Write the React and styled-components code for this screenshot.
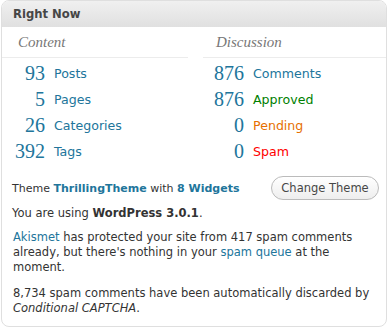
import styled, { createGlobalStyle } from "styled-components";

const GlobalStyle = createGlobalStyle`
  html, body {
    margin: 0;
    padding: 0;
    background: #ffffff;
  }
  body {
    font-family: "DejaVu Sans", Verdana, sans-serif;
    color: #333333;
  }
`;

const link = "#21759b";

const Widget = styled.div`
  box-sizing: border-box;
  width: 386px;
  height: 327px;
  margin-left: 1px;
  border: 1px solid #dfdfdf;
  border-radius: 8px;
  overflow: hidden;
  background: #ffffff;
`;

const Header = styled.h3`
  margin: 0;
  height: 26px;
  line-height: 26px;
  padding-left: 11px;
  font-size: 11.6px;
  font-weight: bold;
  color: #464646;
  background: linear-gradient(to bottom, #f0f0f0, #e0e0e0);
`;

const Table = styled.div`
  display: grid;
  grid-template-columns: 186px 1fr;
  column-gap: 15px;
`;

const Column = styled.div`
  display: flex;
  flex-direction: column;
`;

const SubHead = styled.div`
  height: 30px;
  line-height: 30px;
  padding-left: ${({ $pl }) => $pl}px;
  border-bottom: 1px solid #ececec;
  font-family: "Liberation Serif", Georgia, serif;
  font-style: italic;
  font-size: 15px;
  color: #777777;
  margin-bottom: 2px;
`;

const Row = styled.div`
  display: flex;
  align-items: center;
  height: 26px;
`;

const Count = styled.span`
  width: ${({ $w }) => $w}px;
  text-align: right;
  font-family: "Liberation Serif", Georgia, serif;
  font-size: 20px;
  color: ${link};
`;

const Label = styled.span`
  margin-left: 9px;
  font-size: 12.6px;
  color: ${({ $c }) => $c || link};
`;

const Versions = styled.div`
  padding: 0 7px 0 10px;
  margin-top: 12px;
  font-size: 11.5px;
`;

const ThemeRow = styled.div`
  display: flex;
  align-items: center;
  justify-content: space-between;
  height: 24px;
  font-size: 11px;
`;

const Strong = styled.b`
  color: ${({ $link }) => ($link ? link : "#333333")};
`;

const Button = styled.button`
  box-sizing: border-box;
  height: 24px;
  width: 108px;
  padding: 0;
  border: 1px solid #bbbbbb;
  border-radius: 12px;
  background: linear-gradient(to bottom, #ffffff, #eeeeee);
  font-family: "DejaVu Sans", Verdana, sans-serif;
  font-size: 11.5px;
  color: #464646;
`;

const Text = styled.p`
  margin: ${({ $mt }) => $mt}px 0 0;
  line-height: 15px;
  font-size: 11.5px;
`;

const Block = styled.div`
  padding: 0 14px 0 11px;
`;

const A = styled.span`
  color: ${link};
`;

const content = [
  ["93", "Posts"],
  ["5", "Pages"],
  ["26", "Categories"],
  ["392", "Tags"],
];

const discussion = [
  ["876", "Comments"],
  ["876", "Approved", "#008000"],
  ["0", "Pending", "#e66f00"],
  ["0", "Spam", "#ff0000"],
];

export default function App() {
  return (
    <>
      <GlobalStyle />
      <Widget>
        <Header>Right Now</Header>
        <Table>
          <Column>
            <SubHead $pl={16}>Content</SubHead>
            {content.map(([n, l]) => (
              <Row key={l}>
                <Count $w={43}>{n}</Count>
                <Label>{l}</Label>
              </Row>
            ))}
          </Column>
          <Column>
            <SubHead $pl={13}>Discussion</SubHead>
            {discussion.map(([n, l, c]) => (
              <Row key={l}>
                <Count $w={41}>{n}</Count>
                <Label $c={c}>{l}</Label>
              </Row>
            ))}
          </Column>
        </Table>
        <Versions>
          <ThemeRow>
            <span>
              Theme <Strong $link>ThrillingTheme</Strong> with{" "}
              <Strong $link>8 Widgets</Strong>
            </span>
            <Button>Change Theme</Button>
          </ThemeRow>
          <Text $mt={6}>
            You are using <Strong>WordPress 3.0.1</Strong>.
          </Text>
        </Versions>
        <Block>
          <Text $mt={9}>
            <A>Akismet</A> has protected your site from 417 spam comments
            already, but there's nothing in your <A>spam queue</A> at the
            moment.
          </Text>
          <Text $mt={11}>
            8,734 spam comments have been automatically discarded by{" "}
            <i>Conditional CAPTCHA</i>.
          </Text>
        </Block>
      </Widget>
    </>
  );
}
